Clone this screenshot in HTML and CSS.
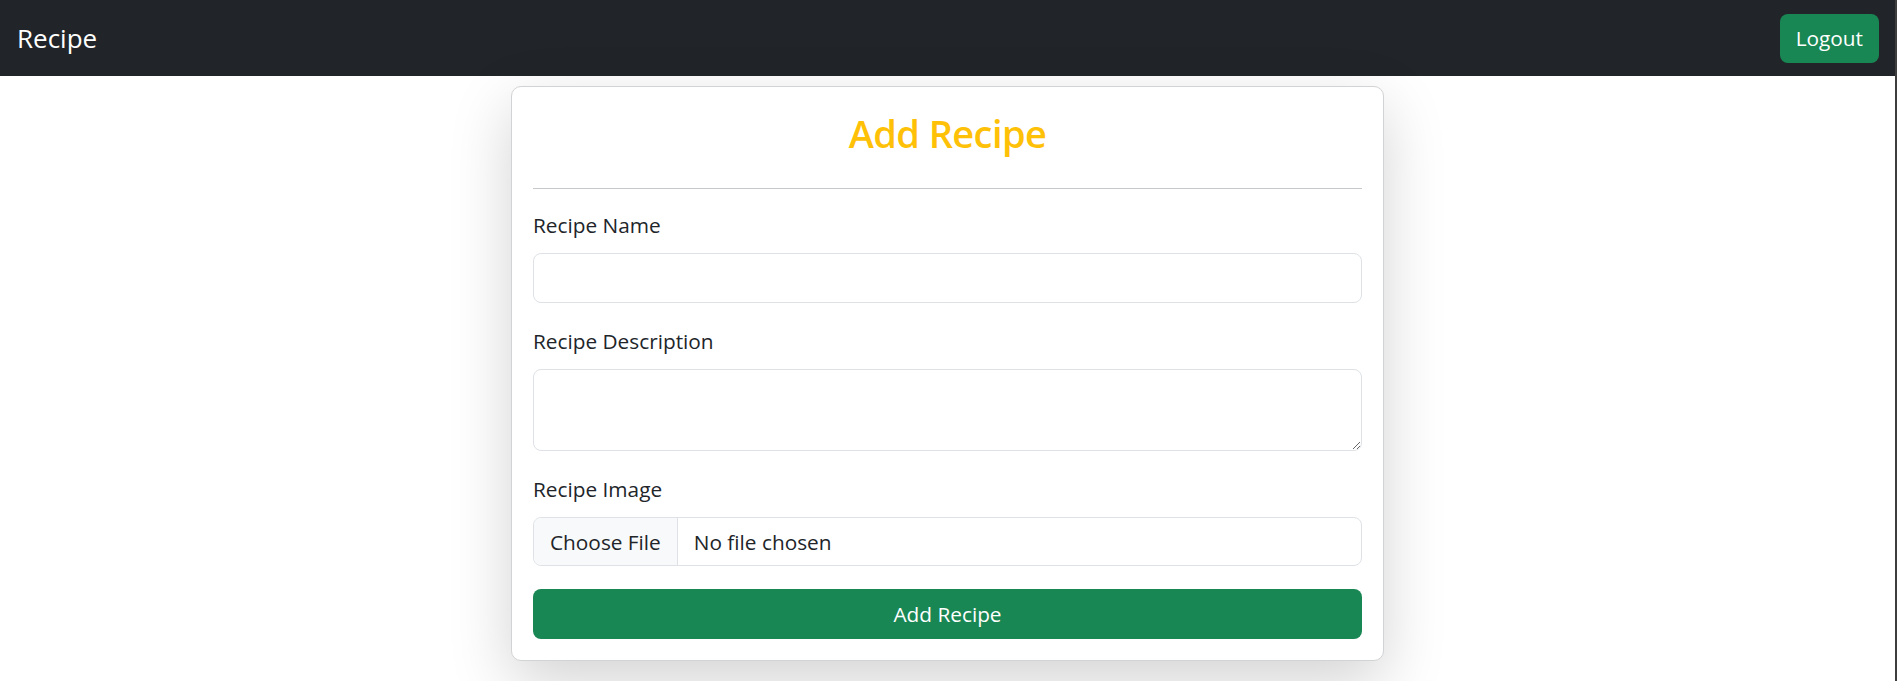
FILE: index.html
```html
<!DOCTYPE html>
<html lang="en">
<head>
<meta charset="utf-8">
<title>Add Recipe</title>
<link rel="stylesheet" href="styles.css">
</head>
<body>
<div class="app">
  <nav class="navbar">
    <span class="brand">Recipe</span>
    <button class="btn btn-logout" type="button">Logout</button>
  </nav>
  <main class="page">
    <div class="card">
      <h2 class="card-title">Add Recipe</h2>
      <hr class="divider">
      <form class="recipe-form">
        <div class="field">
          <label class="field-label" for="name">Recipe Name</label>
          <input class="control control-input" id="name" type="text">
        </div>
        <div class="field">
          <label class="field-label" for="desc">Recipe Description</label>
          <textarea class="control control-textarea" id="desc"></textarea>
        </div>
        <div class="field">
          <label class="field-label" for="img">Recipe Image</label>
          <input class="control control-file" id="img" type="file">
        </div>
        <button class="btn btn-submit" type="button">Add Recipe</button>
      </form>
    </div>
  </main>
</div>
</body>
</html>
```
FILE: styles.css
```css
* { box-sizing: border-box; }
html, body { margin: 0; padding: 0; }
body {
  font-family: "Open Sans", "Noto Sans", sans-serif;
  color: #212529;
  background: #fff;
  height: 681px;
  overflow: hidden;
}
.app {
  height: 681px;
  border-right: 2px solid #3e3e3e;
}
.navbar {
  height: 76px;
  background: #212529;
  display: flex;
  align-items: center;
  justify-content: space-between;
  padding: 0 16px 0 17px;
}
.brand {
  color: #fff;
  font-size: 26px;
  line-height: 39px;
}
.btn {
  font-family: inherit;
  border: 0;
  color: #fff;
  background: #198754;
  border-radius: 8px;
  font-size: 20.8px;
  cursor: pointer;
}
.btn-logout {
  height: 49px;
  padding: 0 16px;
}
.page {
  display: flex;
  justify-content: center;
  padding-top: 10px;
}
.card {
  width: 873px;
  display: flex;
  flex-direction: column;
  border: 1px solid #d2d3d4;
  border-radius: 10px;
  background: #fff;
  padding: 21px 21px 21px;
  box-shadow: 0 21px 62px rgba(0, 0, 0, 0.175);
}
.card-title {
  margin: 0 0 9px;
  text-align: center;
  color: #ffc107;
  font-size: 38px;
  letter-spacing: -0.6px;
  font-weight: 600;
  line-height: 50px;
}
.divider {
  margin: 21px 0 21px;
  border: 0;
  border-top: 1px solid #c8c9ca;
  height: 0;
  width: 100%;
}
.recipe-form {
  display: flex;
  flex-direction: column;
  gap: 23px;
}
.field {
  display: flex;
  flex-direction: column;
}
.field-label {
  font-size: 20.8px;
  line-height: 31px;
  margin: 0 0 12px;
}
.control {
  display: block;
  width: 100%;
  font-family: inherit;
  font-size: 20.8px;
  color: #212529;
  background: #fff;
  border: 1px solid #dee2e6;
  border-radius: 8px;
  padding: 8px 16px;
  outline: none;
}
.control-input { height: 50px; }
.control-textarea { height: 82px; resize: vertical; }
.control-file {
  height: 49px;
  padding: 0;
  overflow: hidden;
  line-height: 47px;
}
.control-file::file-selector-button {
  height: 47px;
  margin: 0 16px 0 0;
  padding: 0 16px;
  border: 0;
  border-right: 1px solid #dee2e6;
  border-radius: 0;
  background: #f8f9fa;
  color: #212529;
  font-family: inherit;
  font-size: 20.8px;
}
.btn-submit {
  width: 100%;
  height: 50px;
}
```
